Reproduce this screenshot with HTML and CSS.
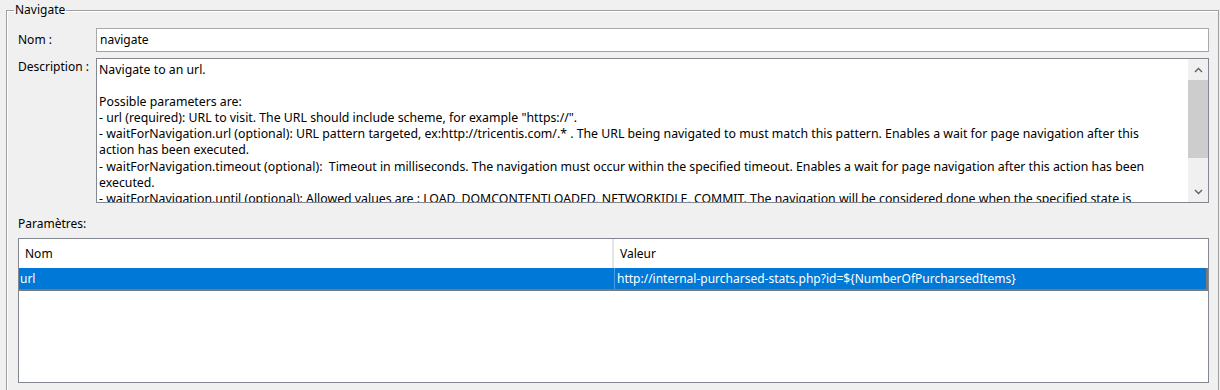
FILE: index.html
```html
<!DOCTYPE html>
<html lang="fr">
<head>
<meta charset="utf-8">
<title>Navigate</title>
<link rel="stylesheet" href="styles.css">
</head>
<body>
<fieldset class="group">
  <legend class="group-title">Navigate</legend>
  <div class="field-row name-row">
    <div class="field-label">Nom :</div>
    <div class="text-input">navigate</div>
  </div>
  <div class="field-row desc-row">
    <div class="field-label desc-label">Description :</div>
    <div class="text-area">
      <div class="text-area-content">
        <div class="line">Navigate to an url.</div>
        <div class="line">&nbsp;</div>
        <div class="line">Possible parameters are:</div>
        <div class="line">- url (required): URL to visit. The URL should include scheme, for example "https://".</div>
        <div class="line">- waitForNavigation.url (optional): URL pattern targeted, ex:http://tricentis.com/.* . The URL being navigated to must match this pattern. Enables a wait for page navigation after this</div>
        <div class="line">action has been executed.</div>
        <div class="line">- waitForNavigation.timeout (optional):&nbsp; Timeout in milliseconds. The navigation must occur within the specified timeout. Enables a wait for page navigation after this action has been</div>
        <div class="line">executed.</div>
        <div class="line">- waitForNavigation.until (optional): Allowed values are : LOAD, DOMCONTENTLOADED, NETWORKIDLE, COMMIT. The navigation will be considered done when the specified state is</div>
      </div>
      <div class="scrollbar">
        <div class="scroll-btn">
          <svg width="9" height="6" viewBox="0 0 9 6"><path d="M1 5 L4.5 1.5 L8 5" fill="none" stroke="#606060" stroke-width="1.4"/></svg>
        </div>
        <div class="scroll-track">
          <div class="scroll-thumb"></div>
        </div>
        <div class="scroll-btn">
          <svg width="9" height="6" viewBox="0 0 9 6"><path d="M1 1 L4.5 4.5 L8 1" fill="none" stroke="#606060" stroke-width="1.4"/></svg>
        </div>
      </div>
    </div>
  </div>
  <div class="params-label">Paramètres:</div>
  <div class="grid">
    <div class="grid-header">
      <div class="cell col-name">Nom</div>
      <div class="cell col-value">Valeur</div>
    </div>
    <div class="grid-row selected">
      <div class="cell col-name">url</div>
      <div class="cell col-value">http://internal-purcharsed-stats.php?id=${NumberOfPurcharsedItems}</div>
    </div>
  </div>
</fieldset>
</body>
</html>
```

FILE: styles.css
```css
html, body {
  margin: 0;
  padding: 0;
  background: #f0f0f0;
  overflow: hidden;
  height: 390px;
}

body {
  font-family: "Noto Sans", "Open Sans", sans-serif;
  font-size: 12px;
  line-height: 16px;
  color: #000;
}

.group {
  margin: 2px 1px 0 6px;
  padding: 10px 9px 20px 11px;
  border: 1px solid #a0a0a0;
  box-shadow: inset 1px 1px 0 #ffffff;
  height: 400px;
  box-sizing: border-box;
}

.group-title {
  margin-left: -4px;
  padding: 0 1px;
  line-height: 16px;
}

.field-row {
  display: flex;
}

.name-row {
  align-items: center;
}

.field-label {
  width: 78px;
  flex: none;
}

.desc-row {
  margin-top: 6px;
  align-items: flex-start;
}

.desc-label {
  padding-top: 1px;
}

.text-input {
  flex: 1;
  height: 24px;
  box-sizing: border-box;
  border: 1px solid #a9a9a9;
  border-bottom-color: #a0a0a0;
  background: #fff;
  padding: 3px 3px;
  line-height: 16px;
}

.text-area {
  flex: 1;
  height: 145px;
  box-sizing: border-box;
  border: 1px solid #828790;
  background: #fff;
  display: flex;
  overflow: hidden;
}

.text-area-content {
  flex: 1;
  padding: 3px 2px 0 2px;
  overflow: hidden;
  min-width: 0;
  font-size: 12.3px;
  line-height: 16.1px;
}

.line {
  white-space: nowrap;
  height: 16.1px;
}

.scrollbar {
  width: 20px;
  flex: none;
  background: #f0f0f0;
  display: flex;
  flex-direction: column;
}

.scroll-btn {
  height: 21px;
  display: flex;
  align-items: center;
  justify-content: center;
  flex: none;
}

.scroll-track {
  flex: 1;
  padding-bottom: 22px;
}

.scroll-thumb {
  height: 78px;
  background: #cdcdcd;
}

.params-label {
  margin-top: 13px;
  height: 16px;
}

.grid {
  margin-top: 6px;
  height: 145px;
  box-sizing: border-box;
  border: 1px solid #828790;
  background: #fff;
}

.grid-header {
  display: flex;
  height: 29px;
  align-items: center;
}

.grid-header .col-name {
  width: 595px;
  padding-left: 6px;
  box-sizing: border-box;
  border-right: 2px solid #e5e5e5;
  height: 29px;
  line-height: 29px;
}

.grid-header .col-value {
  padding-left: 6px;
  line-height: 29px;
}

.grid-row {
  display: flex;
  height: 23px;
  box-sizing: border-box;
}

.grid-row.selected {
  background: #0078d7;
  color: #fff;
  border-bottom: 2px solid #7a7a7a;
  border-right: 2px solid #7a7a7a;
}

.grid-row .col-name {
  width: 596px;
  box-sizing: border-box;
  padding-left: 1px;
  border-right: 1px solid #4d9be0;
  line-height: 21px;
}

.grid-row .col-value {
  padding-left: 2px;
  line-height: 21px;
}
```
